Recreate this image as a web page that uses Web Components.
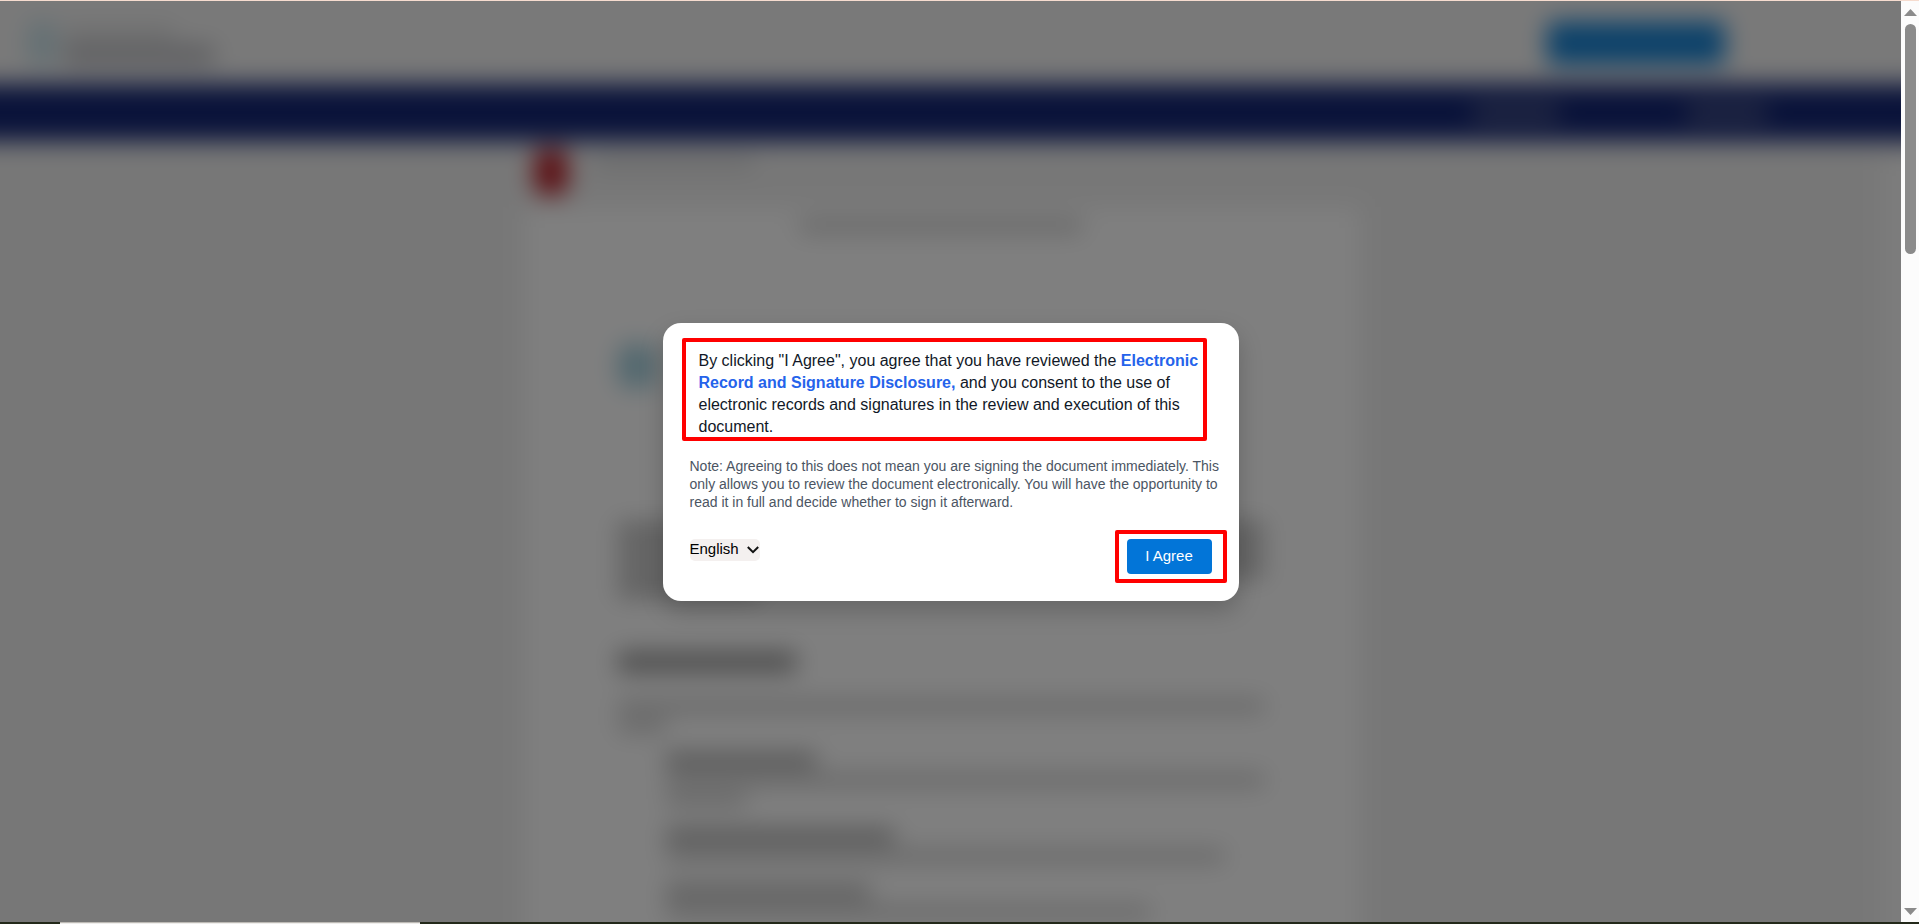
<!DOCTYPE html>
<html lang="en">
<head>
<meta charset="utf-8">
<title>Electronic signature consent</title>
<style>
  html, body { margin: 0; height: 100%; }
  body { font-family: "Liberation Sans", Arial, sans-serif; background: #efefef; overflow: hidden; }
</style>
</head>
<body>
<app-window>
  <page-backdrop></page-backdrop>
  <consent-dialog>
    <call-out slot="terms"><span>By clicking "I Agree", you agree that you have reviewed the</span> <a href="#disclosure"><span>Electronic</span> <span>Record and Signature Disclosure,</span></a> <span>and you consent to the use of</span> <span>electronic records and signatures in the review and execution of this</span> <span>document.</span></call-out>
    <span slot="note">Note: Agreeing to this does not mean you are signing the document immediately. This only allows you to review the document electronically. You will have the opportunity to read it in full and decide whether to sign it afterward.</span>
    <language-select slot="language"></language-select>
    <agree-button slot="action">I Agree</agree-button>
  </consent-dialog>
</app-window>

<script>
const define = (name, html) => {
  const template = document.createElement('template');
  template.innerHTML = html;
  customElements.define(name, class extends HTMLElement {
    constructor() {
      super();
      this.attachShadow({ mode: 'open' }).append(template.content.cloneNode(true));
    }
  });
};

// Window frame: page area, scroll rail and the strip of desktop under it
define('app-window', `
  <style>
    :host { display: flex; flex-direction: column; height: 100vh; }
    .top { height: 1px; background: #f6dccf; }
    .middle { flex: 1; min-height: 0; display: flex; }
    .stage { flex: 1; min-width: 0; display: grid; grid-template: minmax(0, 1fr) / minmax(0, 1fr); overflow: hidden; }
    ::slotted(*) { grid-area: 1 / 1; }
    .bottom { height: 2px; background: #23291a; display: flex; padding-left: 60px; }
    .bottom i { width: 360px; background: #efeeec; border-top: 1px solid #bdbab5; box-sizing: border-box; }
  </style>
  <div class="top"></div>
  <div class="middle"><div class="stage"><slot></slot></div><scroll-rail></scroll-rail></div>
  <div class="bottom"><i></i></div>`);

define('scroll-rail', `
  <style>
    :host { display: flex; flex-direction: column; align-items: center; box-sizing: border-box; width: 18px; padding: 8px 0 7px 1px; background: #fcfcfc; }
    svg { display: block; width: 13px; height: 7px; fill: #8b8b8b; }
    .thumb { height: 230px; width: 11px; margin: 8px 0 auto; border-radius: 6px; background: #8b8b8b; }
  </style>
  <svg viewBox="0 0 13 7"><path d="M6.5 0 13 7H0z"/></svg>
  <div class="thumb"></div>
  <svg viewBox="0 0 13 7"><path d="M0 0h13L6.5 7z"/></svg>`);

// The document viewer behind the dialog; illegible lines are drawn as bars.
// It bleeds 40px past the stage on every side so the blur has no pale rim.
define('page-backdrop', `
  <style>
    :host { display: flex; flex-direction: column; min-height: 0; margin: -40px; overflow: hidden; background: #efefef; filter: blur(12px); }
    header { flex: none; height: 123px; display: flex; align-items: center; background: #f3f3f3; box-sizing: border-box; padding: 40px 216px 0 68px; gap: 8px; }
    .mark { width: 28px; height: 44px; border-radius: 8px; background: #c6e0e8; }
    .name { display: grid; gap: 6px; margin-right: auto; padding-top: 6px; }
    .cta { width: 178px; height: 44px; border-radius: 6px; background: #1a84d4; }
    nav { flex: none; height: 57px; display: flex; justify-content: flex-end; align-items: center; gap: 128px; padding-right: 174px; background: #142674; }
    nav text-bar { --ink: #656d92; }
    .body { flex: 1; min-height: 0; display: flex; }
    .viewer { flex: 1; min-width: 0; display: flex; flex-direction: column; align-items: center; padding-left: 40px; }
    .rail { width: 58px; background: #fafafa; margin-top: 16px; }
    .title { flex: none; width: 836px; height: 66px; display: flex; align-items: flex-start; gap: 26px; box-sizing: border-box; padding: 8px 0 0 10px; }
    .pdf { width: 34px; height: 46px; border-radius: 12px; background: #b82028; }
    .title text-bar { margin-top: 7px; }
    .paper { flex: 1; min-height: 0; overflow: hidden; box-sizing: border-box; width: 836px; padding: 13px 96px 0 94px; background: #fff; }
    .logo { width: 38px; height: 44px; border-radius: 10px; background: #a4d0de; margin: 112px 0 136px; }
    .para, .list { display: grid; gap: 8px; }
    .list { padding-left: 48px; }
  </style>
  <header>
    <div class="mark"></div>
    <div class="name"><text-bar style="--w:110px;--ink:#d6d7d8"></text-bar><text-bar style="--w:150px;--h:20px;--ink:#bcbdc2"></text-bar></div>
    <div class="cta"></div>
  </header>
  <nav><text-bar style="--w:86px"></text-bar><text-bar style="--w:80px"></text-bar></nav>
  <div class="body">
    <div class="viewer">
      <div class="title"><div class="pdf"></div><text-bar style="--w:160px;--ink:#d2d3d5"></text-bar></div>
      <div class="paper">
        <text-bar style="--w:282px;--ink:#c8c8c8;margin:0 auto"></text-bar>
        <div class="logo"></div>
        <div class="para">
          <text-bar style="--ink:#aaa"></text-bar>
          <text-bar style="--ink:#aaa"></text-bar>
          <text-bar style="--ink:#aaa"></text-bar>
          <text-bar style="--w:140px;--ink:#aaa"></text-bar>
        </div>
        <div class="para" style="margin-top:56px">
          <text-bar style="--w:178px;--h:20px;--ink:#989898"></text-bar>
          <text-bar style="margin-top:20px"></text-bar>
          <text-bar style="--w:48px"></text-bar>
        </div>
        <div class="list" style="margin-top:22px">
          <text-bar style="--w:150px;--ink:#989898"></text-bar>
          <text-bar></text-bar>
          <text-bar style="--w:80px"></text-bar>
          <text-bar style="--w:228px;--ink:#989898;margin-top:16px"></text-bar>
          <text-bar style="--w:558px"></text-bar>
          <text-bar style="--w:204px;--ink:#aaa;margin-top:16px"></text-bar>
          <text-bar style="--w:484px"></text-bar>
        </div>
      </div>
    </div>
    <div class="rail"></div>
  </div>`);

define('text-bar', `
  <style>:host { display: block; width: var(--w, 100%); height: var(--h, 12px); background: var(--ink, #c8c8c8); }</style>`);

define('consent-dialog', `
  <style>
    :host { position: relative; display: grid; place-items: center; background: rgba(0, 0, 0, .5); }
    section { box-sizing: border-box; width: 576px; max-width: 100%; padding: 27px; border-radius: 18px; background: #fff; box-shadow: 0 10px 24px rgba(0, 0, 0, .2); }
    .terms { padding: 0 9px; font-size: 16px; line-height: 22px; color: #111827; }
    .note { margin: 19px -12px 28px 0; font-size: 14px; line-height: 18px; color: #4b5563; }
    .actions { display: flex; justify-content: space-between; align-items: flex-start; }
  </style>
  <section role="dialog" aria-modal="true" aria-label="Consent">
    <div class="terms"><slot name="terms"></slot></div>
    <p class="note"><slot name="note"></slot></p>
    <div class="actions"><slot name="language"></slot><slot name="action"></slot></div>
  </section>`);

// Terms text with a red highlight frame laid over it
define('call-out', `
  <style>
    :host { display: block; position: relative; }
    ::slotted(a) { color: #2563eb; font-weight: bold; text-decoration: none; }
    .frame { position: absolute; inset: -12px -4px -3px -17px; border: 4px solid #f00; border-radius: 2px; pointer-events: none; }
  </style>
  <slot></slot><div class="frame"></div>`);

define('language-select', `
  <style>
    :host { display: block; position: relative; }
    select { display: block; appearance: none; width: 70px; height: 22px; margin: 0; padding: 0 0 2px; border: 0; border-radius: 5px; background: #f4f0ef; color: #000; font: 15px/20px "Liberation Sans", Arial, sans-serif; }
    svg { position: absolute; right: 0; top: 4px; width: 14px; height: 14px; fill: none; stroke: #111; stroke-width: 2; pointer-events: none; }
  </style>
  <select aria-label="Language"><option>English</option></select>
  <svg viewBox="0 0 14 14"><path d="M1.8 4 7 9.2 12.2 4"/></svg>`);

define('agree-button', `
  <style>
    :host { display: block; position: relative; }
    button { display: block; width: 85px; height: 35px; padding: 0; border: 0; border-radius: 4px; background: #0275d8; color: #fff; font: 15px/20px "Liberation Sans", Arial, sans-serif; }
    .frame { position: absolute; inset: -9px -15px -9px -12px; border: 4px solid #f00; border-radius: 2px; pointer-events: none; }
  </style>
  <button type="button"><slot></slot></button><div class="frame"></div>`);
</script>
</body>
</html>
